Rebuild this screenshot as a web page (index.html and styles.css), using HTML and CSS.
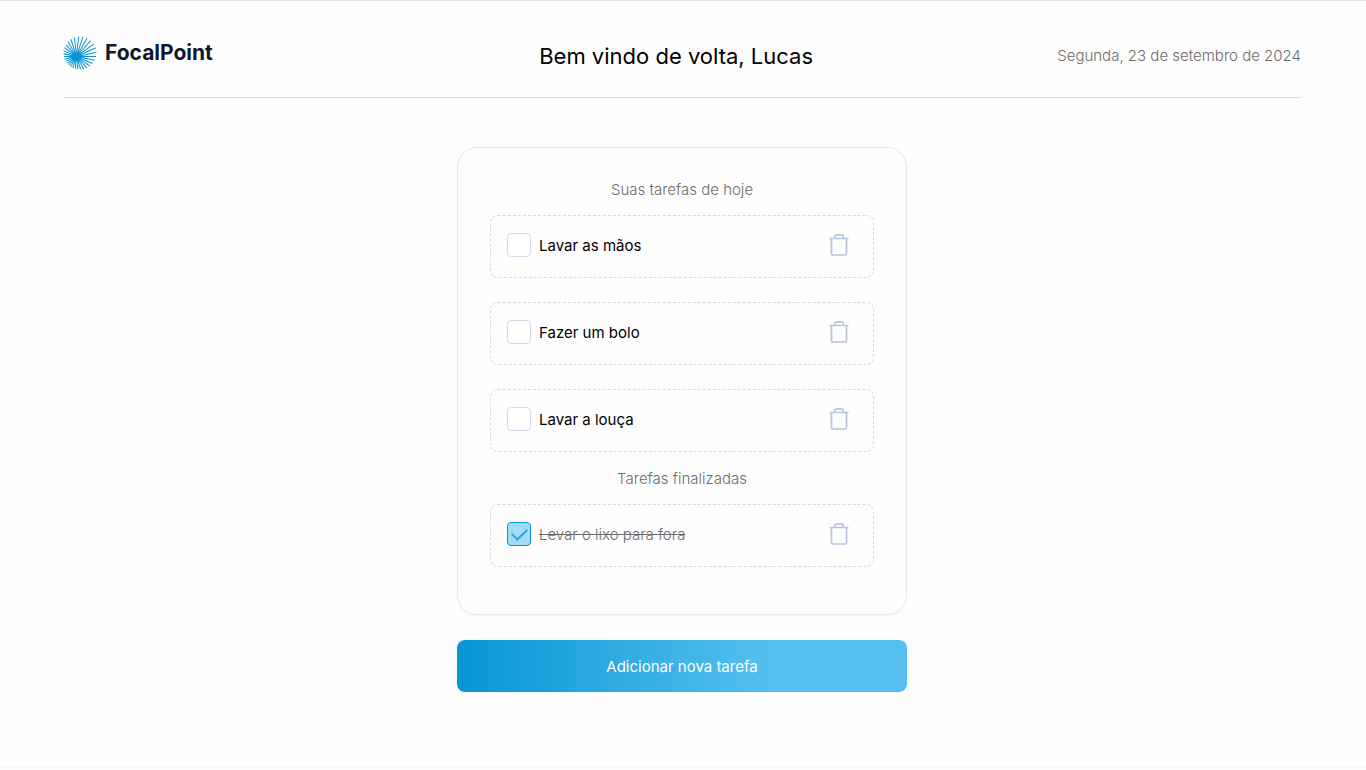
FILE: index.html
```html
<!DOCTYPE html>
<html lang="pt-BR">
<head>
<meta charset="utf-8">
<meta name="viewport" content="width=device-width, initial-scale=1">
<title>FocalPoint</title>
<link rel="stylesheet" href="styles.css">
</head>
<body>
<svg class="defs" width="0" height="0" aria-hidden="true">
  <symbol id="trash" viewBox="0 0 24 24">
    <path d="M2.500 5.500h19M4.500 5.500v14.800a1.700 1.700 0 0 0 1.700 1.700h11.600a1.700 1.700 0 0 0 1.700-1.700V5.500M7.700 5.500V4a2.200 2.200 0 0 1 2.200-2.200h4.200A2.200 2.200 0 0 1 16.300 4v1.500" fill="none" stroke="currentColor" stroke-width="1.700"/>
  </symbol>
</svg>
<div class="page">
  <header class="header">
    <div class="brand">
      <svg class="brand-mark" viewBox="0 0 34 34" aria-hidden="true">
        <defs>
          <clipPath id="disc"><circle cx="17" cy="17" r="16.500"/></clipPath>
          <path id="ray" d="M-27 20.500H54"/>
        </defs>
        <g clip-path="url(#disc)" stroke="#0796d3" stroke-width="1">
          <use href="#ray" transform="rotate(0 13.500 20.500)"/>
          <use href="#ray" transform="rotate(12 13.500 20.500)"/>
          <use href="#ray" transform="rotate(24 13.500 20.500)"/>
          <use href="#ray" transform="rotate(36 13.500 20.500)"/>
          <use href="#ray" transform="rotate(48 13.500 20.500)"/>
          <use href="#ray" transform="rotate(60 13.500 20.500)"/>
          <use href="#ray" transform="rotate(72 13.500 20.500)"/>
          <use href="#ray" transform="rotate(84 13.500 20.500)"/>
          <use href="#ray" transform="rotate(96 13.500 20.500)"/>
          <use href="#ray" transform="rotate(108 13.500 20.500)"/>
          <use href="#ray" transform="rotate(120 13.500 20.500)"/>
          <use href="#ray" transform="rotate(132 13.500 20.500)"/>
          <use href="#ray" transform="rotate(144 13.500 20.500)"/>
          <use href="#ray" transform="rotate(156 13.500 20.500)"/>
          <use href="#ray" transform="rotate(168 13.500 20.500)"/>
        </g>
        <circle cx="13.500" cy="20.500" r="4.800" fill="#0796d3"/>
      </svg>
      <span class="brand-name">FocalPoint</span>
    </div>
    <h1 class="welcome">Bem vindo de volta, Lucas</h1>
    <p class="date">Segunda, 23 de setembro de 2024</p>
  </header>
  <main class="main">
    <section class="card">
      <h2 class="card-title">Suas tarefas de hoje</h2>
      <ul class="tasks">
        <li class="task">
          <label class="task-label"><input class="check" type="checkbox"><span class="task-text">Lavar as mãos</span></label>
          <button class="delete" type="button" aria-label="Excluir Lavar as mãos"><svg class="icon"><use href="#trash"/></svg></button>
        </li>
        <li class="task">
          <label class="task-label"><input class="check" type="checkbox"><span class="task-text">Fazer um bolo</span></label>
          <button class="delete" type="button" aria-label="Excluir Fazer um bolo"><svg class="icon"><use href="#trash"/></svg></button>
        </li>
        <li class="task">
          <label class="task-label"><input class="check" type="checkbox"><span class="task-text">Lavar a louça</span></label>
          <button class="delete" type="button" aria-label="Excluir Lavar a louça"><svg class="icon"><use href="#trash"/></svg></button>
        </li>
      </ul>
      <h2 class="card-title card-title-done">Tarefas finalizadas</h2>
      <ul class="tasks">
        <li class="task done">
          <label class="task-label"><input class="check" type="checkbox" checked><span class="task-text">Levar o lixo para fora</span></label>
          <button class="delete" type="button" aria-label="Excluir Levar o lixo para fora"><svg class="icon"><use href="#trash"/></svg></button>
        </li>
      </ul>
    </section>
    <button class="add" type="button">Adicionar nova tarefa</button>
  </main>
</div>
</body>
</html>
```
FILE: styles.css
```css
* { box-sizing: border-box; }
body {
  margin: 0;
  background: #fefefe;
  color: #000;
  font: 400 15px/20px Inter, "Liberation Sans", sans-serif;
}
h1, h2, p, ul { margin: 0; padding: 0; }
button, input { font: inherit; margin: 0; }
.defs { display: block; }
.page {
  min-height: calc(100vh - 2px);
  padding: 0 65px 0 63px;
  border-top: 1px solid #dcdce2;
  border-bottom: 1px solid #f7f7f7;
}
.header {
  display: flex;
  align-items: center;
  justify-content: space-between;
  height: 97px;
  padding-top: 14px;
  border-bottom: 1px solid #d7dbe6;
}
.brand {
  display: flex;
  align-items: center;
  gap: 8px;
  min-width: 232px;
  padding-bottom: 6px;
}
.brand-mark { width: 34px; height: 34px; }
.brand-name { font-size: 21px; font-weight: 700; color: #0f172a; }
.welcome { font-size: 22px; line-height: 32px; font-weight: 400; }
.date { font-weight: 300; color: #6b6b6b; }
.main {
  width: 100%;
  max-width: 450px;
  margin: 49px auto 0;
}
.card {
  padding: 32px 32px 47px;
  border: 1px solid #e8e9f0;
  border-radius: 20px;
  box-shadow: 0 1px 2px rgba(30, 30, 80, .06);
}
.card-title {
  margin-bottom: 15px;
  text-align: center;
  font-size: 15px;
  font-weight: 300;
  color: #6b6b6b;
}
.card-title-done { margin: 17px 0 15px; }
.tasks { display: grid; gap: 24px; list-style: none; }
.task {
  display: flex;
  align-items: center;
  justify-content: space-between;
  height: 63px;
  padding: 0 22px 3px 16px;
  border: 1px dashed #d7d9e6;
  border-radius: 8px;
}
.task-label { display: flex; align-items: center; gap: 8px; }
.task-text { padding-top: 2px; }
.check {
  appearance: none;
  width: 24px;
  height: 24px;
  border: 1px solid #d3d9ea;
  border-radius: 4px;
  background: #fff;
}
.check:checked {
  display: grid;
  place-content: center;
  border-color: #0796d3;
  background: #a1dbf8;
}
.check:checked::before {
  content: "";
  width: 13px;
  height: 7px;
  margin-bottom: 4px;
  border: solid #2ba6dd;
  border-width: 0 0 2px 2px;
  transform: rotate(-45deg);
}
.done .task-label { font-weight: 300; color: #6b6b6b; text-decoration: line-through; }
.delete {
  display: flex;
  padding: 0;
  border: 0;
  background: none;
  color: #b9c3db;
  cursor: pointer;
}
.icon { width: 24px; height: 24px; }
.add {
  width: 100%;
  height: 52px;
  margin-top: 25px;
  padding: 2px 0 0;
  border: 0;
  border-radius: 8px;
  background: linear-gradient(90deg, #0796d3, #55c0f0 70%);
  color: #fff;
  cursor: pointer;
}
```
